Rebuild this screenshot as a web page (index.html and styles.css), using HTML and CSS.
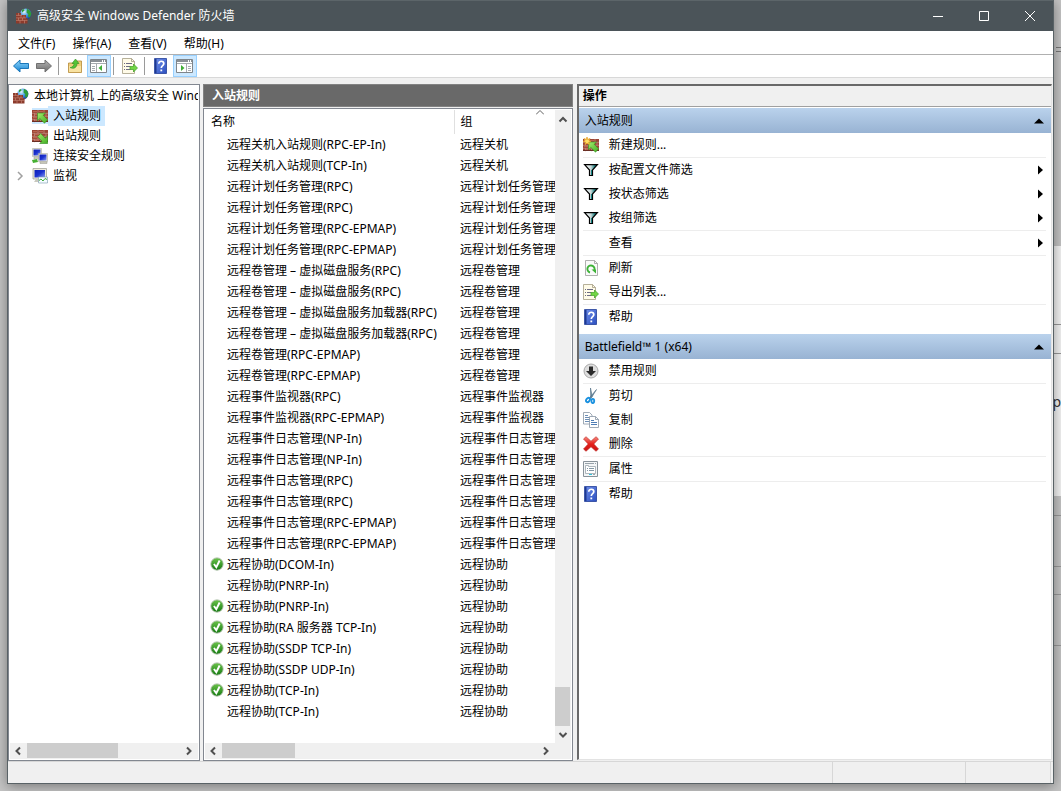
FILE: index.html
```
<!DOCTYPE html>
<html lang="zh-CN">
<head>
<meta charset="utf-8">
<title>高级安全 Windows Defender 防火墙</title>
<link rel="stylesheet" href="styles.css">
</head>
<body>
<svg class="sprite" aria-hidden="true">
  <defs>
    <linearGradient id="g-blue" x1="0" y1="0" x2="0" y2="1"><stop offset="0" stop-color="#8fd6fb"/><stop offset="1" stop-color="#1583d3"/></linearGradient>
    <linearGradient id="g-gray" x1="0" y1="0" x2="0" y2="1"><stop offset="0" stop-color="#b5b5b5"/><stop offset="1" stop-color="#6c6c6c"/></linearGradient>
    <linearGradient id="g-help" x1="0" y1="0" x2="1" y2="1"><stop offset="0" stop-color="#7190ea"/><stop offset="1" stop-color="#2b4fc0"/></linearGradient>
    <linearGradient id="g-red" x1="0" y1="0" x2="0" y2="1"><stop offset="0" stop-color="#f58a80"/><stop offset="0.5" stop-color="#e5201b"/><stop offset="1" stop-color="#c51414"/></linearGradient>
    <radialGradient id="g-globe" cx="0.35" cy="0.3" r="0.8"><stop offset="0" stop-color="#e4f6ff"/><stop offset="0.5" stop-color="#3f97dc"/><stop offset="1" stop-color="#0c3288"/></radialGradient>
    <linearGradient id="g-screen" x1="0" y1="0" x2="1" y2="1"><stop offset="0" stop-color="#0c1fb8"/><stop offset="0.5" stop-color="#1d33d0"/><stop offset="1" stop-color="#8ca0f4"/></linearGradient>
    <linearGradient id="g-funnel" x1="0" y1="0" x2="1" y2="0"><stop offset="0" stop-color="#fff"/><stop offset="0.5" stop-color="#c9d8d8"/><stop offset="0.8" stop-color="#128080"/></linearGradient>
    <linearGradient id="g-ok" x1="0" y1="0" x2="0" y2="1"><stop offset="0" stop-color="#6cc44b"/><stop offset="1" stop-color="#157a12"/></linearGradient>
    <linearGradient id="g-arrow" x1="0" y1="0" x2="1" y2="1"><stop offset="0" stop-color="#a5ec6e"/><stop offset="1" stop-color="#3fae22"/></linearGradient>
  </defs>
  <symbol id="i-wall" viewBox="0 0 16 16">
    <path fill="#9b4434" d="M0 2h16v12H0z"/>
    <path fill="#bb6450" d="M1 3h4v1H1zM7 3h4v1H7zM3 6h4v1H3zM1 9h4v1H1zM3 12h4v1H3z"/>
    <path stroke="#cda092" stroke-width="0.6" fill="none" d="M0 5.300h16M0 8.300h16M0 11.300h16M6 2v3.300M12 2v3.300M2.500 5.300v3M8.500 5.300v3M14 5.300v3M6 8.300v3M12 8.300v3M2.500 11.300v3M8.500 11.300v3"/>
    <path stroke="#6a2f24" fill="none" d="M0 13.500h16"/>
  </symbol>
  <symbol id="i-firewall" viewBox="0 0 16 16">
    <circle cx="9.800" cy="6" r="5.600" fill="url(#g-globe)"/>
    <path fill="#2f9e35" d="M11 .800l3 2 1.400 3-1.500 4-2-1.500.5-2L10.500 4.500zM6 2l2-1 .5 1.500L6 4.500z"/>
    <path fill="#8c3b2c" d="M0 5h5v2h5v3h1.500v5.500H0z"/>
    <path stroke="#c98b7b" stroke-width="0.6" fill="none" d="M0 7.400h6M0 9.900h10M0 12.400h11.500M2.500 5v2.400M5 7.400v2.500M8 7.400v2.500M2.500 9.900v2.500M6.500 9.900v2.500M4 12.400v3M8.500 12.400v3"/>
  </symbol>
  <symbol id="i-in" viewBox="0 0 16 16">
    <use href="#i-wall"/>
    <path fill="url(#g-arrow)" stroke="#2f8a1c" stroke-width="0.6" stroke-linejoin="round" d="M5.500 5h8l-2.300 2.300 4.500 4.500-3.200 3.400-4.700-4.700-2.300 2.300z"/>
  </symbol>
  <symbol id="i-out" viewBox="0 0 16 16">
    <use href="#i-wall"/>
    <path fill="url(#g-arrow)" stroke="#2f8a1c" stroke-width="0.6" stroke-linejoin="round" d="M15.700 15.500h-8L10 13.200 5.500 8.700l3.200-3.200 4.700 4.700 2.300-2.500z"/>
  </symbol>
  <symbol id="i-newrule" viewBox="0 0 16 16">
    <use href="#i-in"/>
    <path fill="#ffdf67" stroke="#e59b20" stroke-width="0.700" d="M4 0l.8 2.400L7 1.500 6 3.500 8 4.500 5.700 5.200 6.500 7.500 4 6.200 2 7.500l.6-2.300L0 4.500l2-1-1-2 2.200.9z"/>
  </symbol>
  <symbol id="i-conn" viewBox="0 0 16 16">
    <path fill="#eceadc" stroke="#9c9c90" stroke-width="0.5" d="M.5.500h9v8h-9z"/>
    <path fill="url(#g-screen)" d="M1.500 1.500h7v6h-7z"/>
    <path fill="#d8d8c8" stroke="#91918a" stroke-width="0.5" d="M2 9h5v2H2z"/>
    <path fill="#eceadc" stroke="#9c9c90" stroke-width="0.5" d="M6.500 5.500h9v8h-9z"/>
    <path fill="url(#g-screen)" d="M7.500 6.500h7v6h-7z"/>
    <path fill="#d8d8c8" stroke="#91918a" stroke-width="0.5" d="M8 14h7v1.500H8z"/>
    <path fill="#46b032" d="M0 12l5-1 1 3-5 1z"/>
  </symbol>
  <symbol id="i-monitor" viewBox="0 0 16 16">
    <path fill="#eceadc" stroke="#9c9c90" stroke-width="0.7" d="M1 .500h13.500v10.500H1z"/>
    <path fill="url(#g-screen)" d="M2.500 2h10.500v7.500H2.500z"/>
    <path fill="#c8c8bd" d="M4 11h7l2 3H2z"/>
    <path fill="#f4fbff" stroke="#7899ac" stroke-width="0.6" d="M6.500 9h9v6h-9z"/>
    <path fill="none" stroke="#3eac3a" d="M7 12.500l2-1.500 2 2 2-2.500 2 1"/>
  </symbol>
  <symbol id="i-back" viewBox="0 0 16 16"><path fill="url(#g-blue)" stroke="#1976b9" stroke-linejoin="round" d="M.5 8L7 2v3.500h8.500v5H7V14z"/></symbol>
  <symbol id="i-fwd" viewBox="0 0 16 16"><path fill="url(#g-gray)" stroke="#707070" stroke-linejoin="round" d="M15.500 8L9 2v3.500H.5v5H9V14z"/></symbol>
  <symbol id="i-folder" viewBox="0 0 16 16">
    <path fill="#efcf7c" stroke="#b58a37" stroke-width="0.8" d="M1.500 5h7l1-2h5v11.500h-13z"/>
    <path fill="#f8e2a1" d="M2 8h12v6H2z"/>
    <path fill="#55c437" stroke="#2f8d21" stroke-width="0.6" d="M3 9.500c3-.5 4-2 4-4H5L8.500 1 12 5.500h-2c0 4-3 6-7 4z"/>
  </symbol>
  <symbol id="i-pane-l" viewBox="0 0 18 16">
    <path fill="#fff" stroke="#7f858a" d="M.5 1.500h16v13H.5z"/><path fill="#898f95" d="M1 2h11v2H1zM13 2h1v2h-1zM15 2h1v2h-1z"/><path fill="#a6abb0" d="M1 5h15v1H1zM6 6h1v8H6zM2 8h3v1H2zM2 10h3v1H2zM2 12h3v1H2z"/><path fill="#3fae37" d="M12 7v6L8.500 10z"/>
  </symbol>
  <symbol id="i-pane-r" viewBox="0 0 18 16">
    <path fill="#fff" stroke="#7f858a" d="M.5 1.500h16v13H.5z"/><path fill="#898f95" d="M1 2h11v2H1zM13 2h1v2h-1zM15 2h1v2h-1z"/><path fill="#a6abb0" d="M1 5h15v1H1zM10 6h1v8h-1zM12 8h3v1h-3zM12 10h3v1h-3zM12 12h3v1h-3z"/><path fill="#3fae37" d="M5 7v6l3.500-3z"/>
  </symbol>
  <symbol id="i-export" viewBox="0 0 16 16">
    <path fill="#fffbe8" stroke="#a39c82" stroke-width="0.8" d="M.5.500h9l3 3v12H.5z"/><path fill="none" stroke="#a39c82" stroke-width="0.8" d="M9.500.500v3h3"/>
    <path fill="#6c6c85" d="M2 5h1v1H2zM4 5h6v1H4zM2 8h1v1H2zM4 8h4v1H4zM2 11h1v1H2zM4 11h4v1H4z"/>
    <path fill="#72d644" stroke="#3c9d24" stroke-width="0.7" d="M8 8.500h3.500V6l4 4-4 4v-2.500H8z"/>
  </symbol>
  <symbol id="i-help" viewBox="0 0 16 16">
    <path fill="url(#g-help)" stroke="#233f98" stroke-width="0.8" d="M1.500.500h12v15h-12z"/><path fill="#1e3990" d="M2 1h1.500v14H2z"/>
    <path fill="none" stroke="#fff" stroke-width="1.700" d="M5.800 5.700c0-3.300 5-3.200 5 0 0 2-2.500 2-2.500 4.300"/><path fill="#fff" d="M7.400 11.500h1.800v1.800H7.400z"/>
  </symbol>
  <symbol id="i-funnel" viewBox="0 0 16 16">
    <path fill="url(#g-funnel)" stroke="#000" stroke-width="1.200" d="M1.600 2.600h12.800L9.500 8v5.500h-3V8z"/><path fill="#128080" d="M8 8h1v5H8z"/>
  </symbol>
  <symbol id="i-refresh" viewBox="0 0 16 16">
    <path fill="#fafafa" stroke="#9c9c9c" stroke-width="0.8" d="M2.500.500h9l3 3v12h-12z"/><path fill="none" stroke="#9c9c9c" stroke-width="0.8" d="M11.500.500v3h3"/>
    <path fill="none" stroke="#3db237" stroke-width="1.900" d="M7 12.500a3.600 3.600 0 1 1 4-1.500"/><path fill="#3db237" d="M8.500 9.500h4.500v4z"/>
  </symbol>
  <symbol id="i-disable" viewBox="0 0 16 16">
    <circle cx="8" cy="8" r="7" fill="#dedede" stroke="#aaa"/><path fill="#2b2b2b" d="M6 3.500h4V8h3l-5 5-5-5h3z"/>
  </symbol>
  <symbol id="i-cut" viewBox="0 0 16 16">
    <path fill="#7f9db3" stroke="#4c6a80" stroke-width="0.6" d="M7.500 0l1.700 8.500-1.500 1zM13.500 1.500L8 10.500 6.500 9.800z"/>
    <ellipse cx="5" cy="12" rx="1.600" ry="2.300" transform="rotate(40 5 12)" fill="none" stroke="#1c92e0" stroke-width="1.900"/><ellipse cx="9.800" cy="13" rx="1.400" ry="2.100" fill="none" stroke="#1c92e0" stroke-width="1.900"/>
  </symbol>
  <symbol id="i-copy" viewBox="0 0 16 16">
    <path fill="#fff" stroke="#8895a5" stroke-width="0.8" d="M.5.500h6l2.500 2.500v9H.5z"/><path stroke="#6c8eb5" fill="none" d="M2 3.500h3M2 5.500h5M2 7.500h5M2 9.500h5"/>
    <path fill="#fff" stroke="#8895a5" stroke-width="0.8" d="M6.500 4.500h6l3 3v8h-9z"/><path fill="none" stroke="#8895a5" stroke-width="0.8" d="M12.500 4.500v3h3"/><path stroke="#4e7db5" fill="none" d="M8 8.500h3M8 10.500h6M8 12.500h6"/>
  </symbol>
  <symbol id="i-delete" viewBox="0 0 16 16"><path fill="url(#g-red)" stroke="#bd2922" stroke-width="0.6" stroke-linejoin="round" d="M.5 3L3 .700l5 4.500 5-4.500L15.500 3l-4.700 5 4.700 5-2.500 2.300-5-4.500-5 4.500L.500 13l4.700-5z"/></symbol>
  <symbol id="i-props" viewBox="0 0 16 16">
    <path fill="#f4f6f7" stroke="#88929a" d="M.5.500h14v15H.5z"/><path fill="#98a2aa" d="M2 2h9v1H2zM12 2h1v1h-1z"/>
    <path fill="#fff" stroke="#9ba6ad" stroke-width="0.8" d="M2.500 4.500h3v1h7v7h-10z"/><path fill="#8297a5" d="M4 7h1v1H4zM6 7h5v1H6zM4 9h1v1H4zM6 9h5v1H6z"/><path fill="#2cc4dd" d="M6 13h3v1H6z"/><path fill="#9ba6ad" d="M10 13h2v1h-2z"/>
  </symbol>
  <symbol id="i-ok" viewBox="0 0 16 16"><circle cx="8" cy="8" r="7" fill="url(#g-ok)" stroke="#a2b79c"/><path fill="none" stroke="#fff" stroke-width="2.200" d="M4.500 8l2.700 3.700L11 4"/></symbol>
  <symbol id="i-chev-l" viewBox="0 0 16 16"><path fill="none" stroke="#505050" stroke-width="2" d="M10 4.500L6.500 8l3.500 3.500"/></symbol>
  <symbol id="i-chev-r" viewBox="0 0 16 16"><path fill="none" stroke="#505050" stroke-width="2" d="M6 4.500L9.500 8 6 11.500"/></symbol>
  <symbol id="i-chev-u" viewBox="0 0 16 16"><path fill="none" stroke="#505050" stroke-width="2" d="M4.500 10.500L8 7l3.500 3.500"/></symbol>
  <symbol id="i-chev-d" viewBox="0 0 16 16"><path fill="none" stroke="#505050" stroke-width="2" d="M4.500 6L8 9.500 11.500 6"/></symbol>
  <symbol id="i-expand" viewBox="0 0 16 16"><path fill="none" stroke="#a0a0a0" stroke-width="1.500" d="M6 4l4 4-4 4"/></symbol>
  <symbol id="i-tri-u" viewBox="0 0 10 10"><path d="M0 7.500l5-5 5 5z"/></symbol>
  <symbol id="i-tri-r" viewBox="0 0 10 10"><path d="M3 .500L8 5 3 9.500z"/></symbol>
</svg>

<span class="behind" aria-hidden="true">p</span>

<div class="window">
  <header class="titlebar">
    <svg class="icon"><use href="#i-firewall"/></svg>
    <h1>高级安全 Windows Defender 防火墙</h1>
    <button class="caption" aria-label="最小化"><svg viewBox="0 0 10 10"><path d="M0 5.500h10"/></svg></button>
    <button class="caption" aria-label="最大化"><svg viewBox="0 0 10 10"><path d="M.5.500h9v9h-9z"/></svg></button>
    <button class="caption" aria-label="关闭"><svg viewBox="0 0 10 10"><path d="M0 0l10 10M10 0L0 10"/></svg></button>
  </header>

  <nav class="menubar">
    <button>文件(F)</button><button>操作(A)</button><button>查看(V)</button><button>帮助(H)</button>
  </nav>

  <div class="toolbar">
    <div class="history">
      <button aria-label="后退"><svg class="icon"><use href="#i-back"/></svg></button>
      <button aria-label="前进"><svg class="icon"><use href="#i-fwd"/></svg></button>
    </div>
    <span class="divider"></span>
    <button class="tool" aria-label="上一级"><svg class="icon"><use href="#i-folder"/></svg></button>
    <button class="tool on" aria-label="显示控制台树"><svg class="icon wide"><use href="#i-pane-l"/></svg></button>
    <span class="divider"></span>
    <button class="tool" aria-label="导出列表"><svg class="icon"><use href="#i-export"/></svg></button>
    <span class="divider"></span>
    <button class="tool" aria-label="帮助"><svg class="icon"><use href="#i-help"/></svg></button>
    <button class="tool on" aria-label="显示操作窗格"><svg class="icon wide"><use href="#i-pane-r"/></svg></button>
  </div>

  <main class="panes">
    <section class="pane tree">
      <ul>
        <li class="root"><svg class="icon"><use href="#i-firewall"/></svg><span>本地计算机 上的高级安全 Wind</span></li>
        <li><svg class="icon"><use href="#i-in"/></svg><span class="selected">入站规则</span></li>
        <li><svg class="icon"><use href="#i-out"/></svg><span>出站规则</span></li>
        <li><svg class="icon"><use href="#i-conn"/></svg><span>连接安全规则</span></li>
        <li class="parent"><svg class="icon twisty"><use href="#i-expand"/></svg><svg class="icon"><use href="#i-monitor"/></svg><span>监视</span></li>
      </ul>
      <div class="hscroll">
        <button aria-label="向左滚动"><svg class="icon"><use href="#i-chev-l"/></svg></button>
        <div class="track"><div class="thumb tree-thumb"></div></div>
        <button aria-label="向右滚动"><svg class="icon"><use href="#i-chev-r"/></svg></button>
      </div>
    </section>

    <section class="rules">
      <h2>入站规则</h2>
      <div class="pane list">
        <div class="view">
          <div class="clip">
            <table>
              <thead><tr><th class="name">名称</th><th class="group">组<svg class="sort" viewBox="0 0 8 5"><path d="M0 4.500l4-4 4 4"/></svg></th></tr></thead>
              <tbody>
                <tr><td>远程关机入站规则(RPC-EP-In)</td><td>远程关机</td></tr>
                <tr><td>远程关机入站规则(TCP-In)</td><td>远程关机</td></tr>
                <tr><td>远程计划任务管理(RPC)</td><td>远程计划任务管理</td></tr>
                <tr><td>远程计划任务管理(RPC)</td><td>远程计划任务管理</td></tr>
                <tr><td>远程计划任务管理(RPC-EPMAP)</td><td>远程计划任务管理</td></tr>
                <tr><td>远程计划任务管理(RPC-EPMAP)</td><td>远程计划任务管理</td></tr>
                <tr><td>远程卷管理 – 虚拟磁盘服务(RPC)</td><td>远程卷管理</td></tr>
                <tr><td>远程卷管理 – 虚拟磁盘服务(RPC)</td><td>远程卷管理</td></tr>
                <tr><td>远程卷管理 – 虚拟磁盘服务加载器(RPC)</td><td>远程卷管理</td></tr>
                <tr><td>远程卷管理 – 虚拟磁盘服务加载器(RPC)</td><td>远程卷管理</td></tr>
                <tr><td>远程卷管理(RPC-EPMAP)</td><td>远程卷管理</td></tr>
                <tr><td>远程卷管理(RPC-EPMAP)</td><td>远程卷管理</td></tr>
                <tr><td>远程事件监视器(RPC)</td><td>远程事件监视器</td></tr>
                <tr><td>远程事件监视器(RPC-EPMAP)</td><td>远程事件监视器</td></tr>
                <tr><td>远程事件日志管理(NP-In)</td><td>远程事件日志管理</td></tr>
                <tr><td>远程事件日志管理(NP-In)</td><td>远程事件日志管理</td></tr>
                <tr><td>远程事件日志管理(RPC)</td><td>远程事件日志管理</td></tr>
                <tr><td>远程事件日志管理(RPC)</td><td>远程事件日志管理</td></tr>
                <tr><td>远程事件日志管理(RPC-EPMAP)</td><td>远程事件日志管理</td></tr>
                <tr><td>远程事件日志管理(RPC-EPMAP)</td><td>远程事件日志管理</td></tr>
                <tr class="enabled"><td><svg><use href="#i-ok"/></svg>远程协助(DCOM-In)</td><td>远程协助</td></tr>
                <tr><td>远程协助(PNRP-In)</td><td>远程协助</td></tr>
                <tr class="enabled"><td><svg><use href="#i-ok"/></svg>远程协助(PNRP-In)</td><td>远程协助</td></tr>
                <tr class="enabled"><td><svg><use href="#i-ok"/></svg>远程协助(RA 服务器 TCP-In)</td><td>远程协助</td></tr>
                <tr class="enabled"><td><svg><use href="#i-ok"/></svg>远程协助(SSDP TCP-In)</td><td>远程协助</td></tr>
                <tr class="enabled"><td><svg><use href="#i-ok"/></svg>远程协助(SSDP UDP-In)</td><td>远程协助</td></tr>
                <tr class="enabled"><td><svg><use href="#i-ok"/></svg>远程协助(TCP-In)</td><td>远程协助</td></tr>
                <tr><td>远程协助(TCP-In)</td><td>远程协助</td></tr>
              </tbody>
            </table>
          </div>
          <div class="vscroll">
            <button aria-label="向上滚动"><svg class="icon"><use href="#i-chev-u"/></svg></button>
            <div class="track"><div class="thumb"></div></div>
            <button aria-label="向下滚动"><svg class="icon"><use href="#i-chev-d"/></svg></button>
          </div>
        </div>
        <div class="hscroll with-corner">
          <button aria-label="向左滚动"><svg class="icon"><use href="#i-chev-l"/></svg></button>
          <div class="track"><div class="thumb list-thumb"></div></div>
          <button aria-label="向右滚动"><svg class="icon"><use href="#i-chev-r"/></svg></button>
        </div>
      </div>
    </section>

    <aside class="actions">
      <h2>操作</h2>
      <button class="section"><span>入站规则</span><svg class="mark"><use href="#i-tri-u"/></svg></button>
      <div class="group-items">
        <button class="item"><svg class="icon"><use href="#i-newrule"/></svg><span>新建规则...</span></button>
        <hr>
        <button class="item"><svg class="icon"><use href="#i-funnel"/></svg><span>按配置文件筛选</span><svg class="mark"><use href="#i-tri-r"/></svg></button>
        <button class="item"><svg class="icon"><use href="#i-funnel"/></svg><span>按状态筛选</span><svg class="mark"><use href="#i-tri-r"/></svg></button>
        <button class="item"><svg class="icon"><use href="#i-funnel"/></svg><span>按组筛选</span><svg class="mark"><use href="#i-tri-r"/></svg></button>
        <hr>
        <button class="item"><svg class="icon"></svg><span>查看</span><svg class="mark"><use href="#i-tri-r"/></svg></button>
        <hr>
        <button class="item"><svg class="icon"><use href="#i-refresh"/></svg><span>刷新</span></button>
        <button class="item"><svg class="icon"><use href="#i-export"/></svg><span>导出列表...</span></button>
        <hr>
        <button class="item"><svg class="icon"><use href="#i-help"/></svg><span>帮助</span></button>
      </div>
      <button class="section"><span>Battlefield™ 1 (x64)</span><svg class="mark"><use href="#i-tri-u"/></svg></button>
      <div class="group-items">
        <button class="item"><svg class="icon"><use href="#i-disable"/></svg><span>禁用规则</span></button>
        <hr>
        <button class="item"><svg class="icon"><use href="#i-cut"/></svg><span>剪切</span></button>
        <button class="item"><svg class="icon"><use href="#i-copy"/></svg><span>复制</span></button>
        <button class="item"><svg class="icon"><use href="#i-delete"/></svg><span>删除</span></button>
        <hr>
        <button class="item"><svg class="icon"><use href="#i-props"/></svg><span>属性</span></button>
        <hr>
        <button class="item"><svg class="icon"><use href="#i-help"/></svg><span>帮助</span></button>
      </div>
    </aside>
  </main>

  <footer class="statusbar"><span></span><span></span><span></span></footer>
</div>
</body>
</html>
```

FILE: styles.css
```
* { box-sizing: border-box; }

body {
  margin: 0;
  height: 100vh;
  display: flex;
  overflow: hidden;
  padding: 0 7px 7px;
  font: 12px/20px "Noto Sans", "Noto Sans CJK SC", sans-serif;
  color: #000;
  background:
    linear-gradient(#999, #999) right 0 top 324px / 8px 1px no-repeat,
    linear-gradient(#999, #999) right 0 top 353px / 8px 1px no-repeat,
    linear-gradient(#999, #999) right 0 top 515px / 8px 1px no-repeat,
    linear-gradient(#999, #999) right 0 top 566px / 8px 1px no-repeat,
    linear-gradient(#999, #999) right 0 top 594px / 8px 1px no-repeat,
    linear-gradient(#999, #999) right 0 top 645px / 8px 1px no-repeat,
    linear-gradient(#777, #777) right 0 top 47px / 5px 1px no-repeat,
    linear-gradient(#777, #777) right 0 top 51px / 5px 1px no-repeat,
    linear-gradient(#f4f4f4, #f4f4f4) right 0 top 246px / 8px 250px no-repeat,
    #c4c4c4;
}

.sprite { position: absolute; width: 0; height: 0; }

.behind {
  position: absolute;
  right: 0;
  top: 392px;
  font-size: 14px;
  color: #333;
}

button {
  border: 0;
  padding: 0;
  margin: 0;
  background: none;
  color: inherit;
  font: inherit;
  text-align: left;
}

h1, h2, ul { margin: 0; padding: 0; font-size: 12px; font-weight: 400; }

.icon { display: block; flex: none; width: 16px; height: 16px; }
.icon.wide { width: 18px; }

.window {
  position: relative;
  flex: 1;
  min-width: 0;
  display: flex;
  flex-direction: column;
  border: 1px solid #596266;
  border-top: 0;
  background: #f0f0f0;
  box-shadow: 0 2px 12px rgba(0, 0, 0, 0.4);
}

.titlebar {
  display: flex;
  align-items: center;
  height: 31px;
  flex: none;
  padding-left: 8px;
  border-top: 1px solid #5c6569;
  background: #4b5459;
  color: #fff;
}
.titlebar h1 { flex: 1; padding-left: 5px; }
.caption { width: 46px; height: 30px; display: grid; place-items: center; }
.caption svg { width: 10px; height: 10px; overflow: visible; fill: none; stroke: #fff; }

.menubar {
  display: flex;
  gap: 17px;
  height: 24px;
  flex: none;
  padding: 2px 10px 0;
  border-bottom: 1px solid #b0b0b0;
  background: #fff;
}

.toolbar {
  display: flex;
  align-items: center;
  height: 23px;
  flex: none;
  padding-left: 5px;
  border-bottom: 1px solid #d8d8d8;
  background: #fff;
}
.history { display: flex; gap: 7px; margin-right: 4px; }
.toolbar .tool { width: 24px; height: 22px; display: grid; place-items: center; }
.toolbar .on { border: 1px solid #99d1ff; background: #cce8ff; }
.divider { width: 1px; height: 18px; margin: 0 4px 0 2px; background: #9a9a9a; }

.panes {
  flex: 1;
  min-height: 0;
  display: flex;
  padding: 6px 1px 0 0;
}

.pane {
  display: flex;
  flex-direction: column;
  min-height: 0;
  padding: 1px;
  border: 1px solid #828790;
  background: #fff;
}

.tree { width: 192px; flex: none; }
.tree ul { flex: 1; overflow: hidden; list-style: none; }
.tree li { display: flex; align-items: center; height: 20px; padding-left: 22px; white-space: nowrap; }
.tree .root { padding-left: 3px; }
.tree .parent { padding-left: 2px; }
.twisty { margin-right: 4px; }
.tree span { min-width: 0; overflow: hidden; padding-left: 5px; line-height: 20px; }
.tree .root span { padding-right: 0; }
.tree .selected { padding-right: 4px; background: #cce8ff; }
.tree li:has(.selected) .icon { background: #cce8ff; }

.hscroll, .vscroll { display: flex; flex: none; background: #f0f0f0; }
.hscroll { height: 16px; }
.hscroll button { width: 17px; height: 16px; }
.vscroll button { width: 16px; height: 17px; }
.track { flex: 1; }
.hscroll .thumb { height: 15px; background: #cdcdcd; }
.tree-thumb { width: 59%; }
.list-thumb { width: 23%; }
.with-corner { padding-right: 16px; }

.rules {
  flex: 371 1 0;
  min-width: 0;
  display: flex;
  flex-direction: column;
  margin: 0 4px 0 3px;
}
.rules h2 {
  height: 23px;
  margin-bottom: 1px;
  padding-left: 8px;
  border: 1px solid #828282;
  background: #696969;
  color: #fff;
  font-weight: 700;
  line-height: 21px;
}
.list { flex: 1; }
.view { flex: 1; min-height: 0; display: flex; }
.clip { flex: 1; min-width: 0; overflow: hidden; }
.vscroll { width: 16px; flex-direction: column; }
.vscroll .track { display: flex; flex-direction: column; justify-content: flex-end; }
.vscroll .thumb { height: 39px; width: 15px; background: #cdcdcd; }

table { width: 100%; border-collapse: collapse; table-layout: fixed; }
th { height: 24px; padding: 0 0 0 6px; text-align: left; font-weight: 400; }
th.name { width: 249px; border-right: 1px solid #e0e0e0; }
th.group { position: relative; }
.sort {
  position: absolute;
  top: 0;
  right: 11px;
  width: 8px;
  height: 5px;
  fill: none;
  stroke: #606060;
}
td { height: 21px; padding: 0 0 0 6px; white-space: nowrap; overflow: hidden; line-height: 20px; }
td:first-child { padding-left: 22px; }
.enabled td:first-child { padding-left: 5px; }
.enabled svg { width: 14px; height: 14px; margin-right: 3px; vertical-align: -2px; }

.actions {
  flex: 474 1 0;
  min-width: 0;
  margin-bottom: 1px;
  border: 1px solid #e3e3e3;
  border-top: 2px solid #696969;
  border-left: 2px solid #696969;
  background: #fff;
}
.actions h2 {
  height: 21px;
  margin-bottom: 1px;
  padding-left: 4px;
  border-bottom: 1px solid #a0a0a0;
  background: #f0f0f0;
  font-weight: 700;
}
.section, .item { display: flex; align-items: center; width: 100%; }
.section span, .item span { flex: 1; }
.section {
  height: 25px;
  padding: 0 7px 0 6px;
  background: linear-gradient(#bad2ec, #98b3d3);
}
.group-items { padding: 0 5px 0 4px; margin-bottom: 5px; }
.item { height: 24px; padding-right: 1px; }
.item span { padding-left: 10px; }
.mark { width: 10px; height: 10px; }
hr { height: 1px; margin: 0; border: 0; background: #ededed; }

.statusbar {
  display: flex;
  height: 22px;
  flex: none;
  padding-right: 2px;
  border-top: 1px solid #d7d7d7;
}
.statusbar span { border-right: 1px solid #d7d7d7; }
.statusbar span:first-child { flex: 1; }
.statusbar span:nth-child(2) { width: 133px; }
.statusbar span:last-child { width: 85px; }
```
